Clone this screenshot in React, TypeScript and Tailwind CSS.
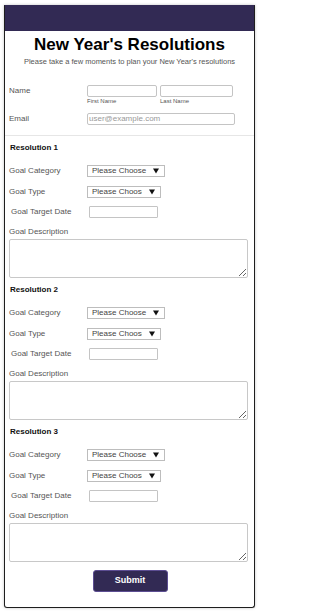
import React from 'react';

const Select = ({ width, textWidth }: { width: string; textWidth: string }) => (
  <div className={`${width} h-[12px] border border-[#bdbdbd] bg-white flex items-center overflow-hidden pl-[4px] pr-[5px]`}>
    <span className={`${textWidth} overflow-hidden whitespace-nowrap text-[8px] leading-[10px] text-[#444]`}>Please Choose</span>
    <svg width="6" height="6" viewBox="0 0 6 6" className="shrink-0 ml-auto">
      <polygon points="0,0.5 6,0.5 3,5.5" fill="#111" />
    </svg>
  </div>
);

const Resolution = ({ n }: { n: number }) => (
  <div className="pt-[7px] pl-[4px] pr-[6px]">
    <div className="text-[8px] leading-[10px] font-bold text-[#111] pl-[1px]">Resolution {n}</div>

    <div className="mt-[12px] flex items-center h-[12px]">
      <div className="w-[78px] text-[8px] leading-[10px] text-[#555]">Goal Category</div>
      <Select width="w-[78px]" textWidth="w-[56px]" />
    </div>

    <div className="mt-[9px] flex items-center h-[12px]">
      <div className="w-[78px] text-[8px] leading-[10px] text-[#555]">Goal Type</div>
      <Select width="w-[74px]" textWidth="w-[50px]" />
    </div>

    <div className="mt-[8px] flex items-center h-[12px]">
      <div className="w-[80px] pl-[2px] text-[8px] leading-[10px] text-[#555]">Goal Target Date</div>
      <div className="w-[69px] h-[12px] border border-[#c4c4c4] rounded-[1px] bg-white" />
    </div>

    <div className="mt-[9px] text-[8px] leading-[10px] text-[#555]">Goal Description</div>
    <textarea className="mt-[2px] block w-[239px] h-[39px] border border-[#c8c8c8] rounded-[2px] bg-white outline-none" />
  </div>
);

export default function App() {
  return (
    <div className="pl-[4px] pt-[5px] pb-[9px] bg-white" style={{ fontFamily: '"Liberation Sans", Arial, sans-serif' }}>
      <div className="w-[251px] border border-[#1e1e1e] border-t-[#322a54] rounded-b-[3px] shadow-[0_0_3px_rgba(0,0,0,0.25)] bg-white overflow-hidden">
        <div className="h-[25px] bg-[#322a54]" />

        <h1 className="mt-[4px] text-center text-[17px] leading-[20px] font-bold text-black">New Year's Resolutions</h1>
        <p className="mt-[2px] text-center text-[7.5px] leading-[10px] text-[#555]">
          Please take a few moments to plan your New Year's resolutions
        </p>

        {/* Name */}
        <div className="mt-[18px] pl-[4px] flex items-start">
          <div className="w-[78px] pt-[1px] text-[8px] leading-[10px] text-[#555]">Name</div>
          <div className="flex gap-[3px]">
            <div>
              <div className="w-[70px] h-[12px] border border-[#c4c4c4] rounded-[2px] bg-white" />
              <div className="mt-[1px] text-[6px] leading-[6px] text-[#555]">First Name</div>
            </div>
            <div>
              <div className="w-[73px] h-[12px] border border-[#c4c4c4] rounded-[2px] bg-white" />
              <div className="mt-[1px] text-[6px] leading-[6px] text-[#555]">Last Name</div>
            </div>
          </div>
        </div>

        {/* Email */}
        <div className="mt-[9px] pl-[4px] flex items-center">
          <div className="w-[78px] text-[8px] leading-[10px] text-[#555]">Email</div>
          <div className="w-[148px] h-[12px] border border-[#c4c4c4] rounded-[2px] bg-white flex items-center pl-[1px]">
            <span className="text-[8px] leading-[10px] text-[#999]">user@example.com</span>
          </div>
        </div>

        <div className="mt-[10px] border-t border-[#e6e6e6]" />

        <Resolution n={1} />
        <Resolution n={2} />
        <Resolution n={3} />

        <div className="mt-[8px] pb-[15px] flex justify-center">
          <button className="ml-[1px] w-[75px] h-[22px] rounded-[3px] bg-[#322a54] border border-[#5c4d92] text-white text-[9px] font-bold">
            Submit
          </button>
        </div>
      </div>
    </div>
  );
}
